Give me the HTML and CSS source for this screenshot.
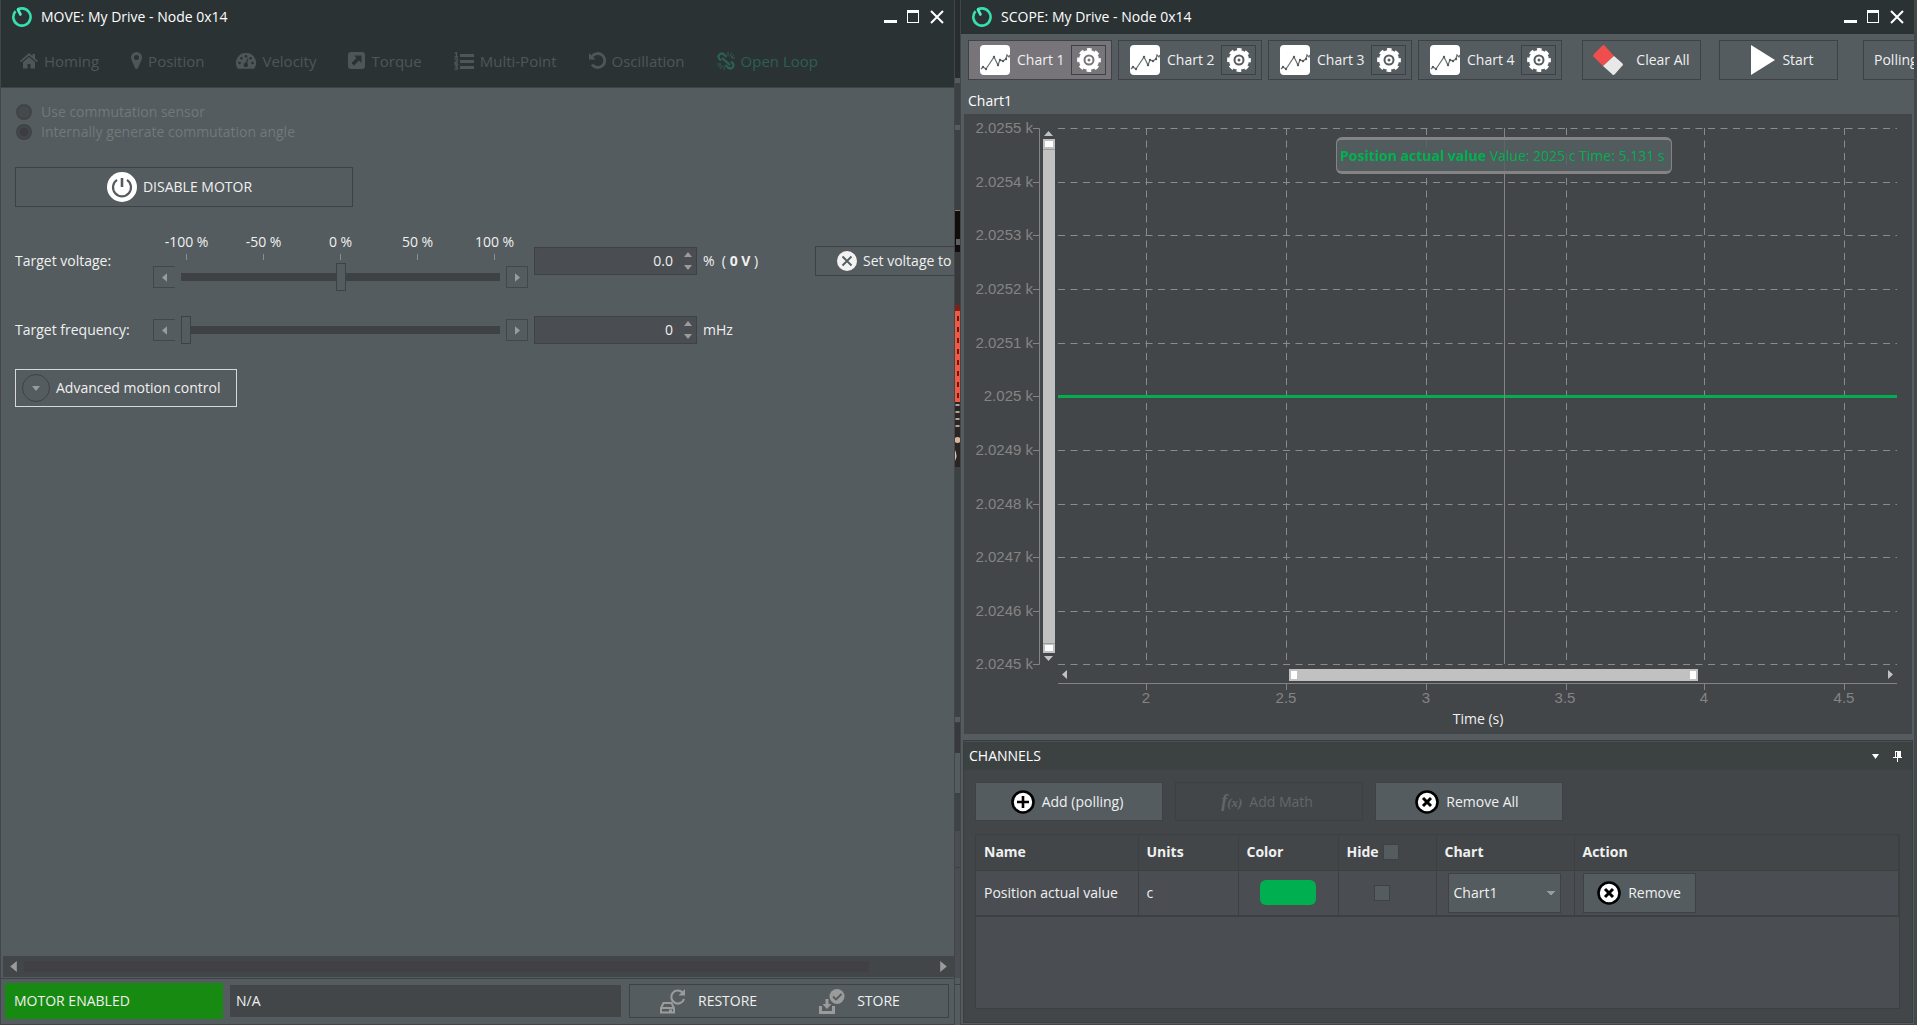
FILE: index.html
```
<!DOCTYPE html>
<html lang="en">
<head>
  <meta charset="UTF-8">
  <meta name="viewport" content="width=device-width, initial-scale=1.0">
  <title>My Drive - Node 0x14</title>
  <link rel="stylesheet" href="styles.css">
</head>
<body>

  <!-- shared icons -->
  <svg class="sprite" width="0" height="0" aria-hidden="true">
    <symbol id="logo" viewBox="0 0 20 20">
      <path d="M3.600 4.200A8.600 8.600 0 1 0 10 1.400c-1.600 0-3 .3-4.400 1.100" fill="none" stroke="#35e0b0" stroke-width="2.600"/>
      <path d="M6 2.600 8.400 7.400" fill="none" stroke="#4deec0" stroke-width="2.800" stroke-linecap="round"/>
    </symbol>
    <symbol id="chart" viewBox="0 0 30 30">
      <rect width="30" height="30" rx="4" fill="#fff"/>
      <path d="M1 24l2-2 3 2 8-12 4 8 2-5 3 1 3-2 1-4 2 2 1-2" fill="none" stroke="#6a7073" stroke-width="1.200"/>
      <g fill="#555c5e"><circle cx="3" cy="22" r="1.200"/><circle cx="6" cy="24" r="1.200"/><circle cx="14" cy="12" r="1.200"/><circle cx="18" cy="20" r="1.200"/><circle cx="20" cy="15" r="1.200"/><circle cx="23" cy="16" r="1.200"/><circle cx="26" cy="14" r="1.200"/></g>
    </symbol>
    <symbol id="gear" viewBox="0 0 24 24">
      <circle cx="12" cy="12" r="7.800" fill="none" stroke="#fff" stroke-width="4.600"/>
      <circle cx="12" cy="12" r="10.400" fill="none" stroke="#fff" stroke-width="3" stroke-dasharray="4.600 3.568" stroke-dashoffset="2.300"/>
      <circle cx="12" cy="12" r="2.500" fill="none" stroke="#fff" stroke-width="2"/>
    </symbol>
    <symbol id="cross" viewBox="0 0 24 24">
      <circle cx="12" cy="12" r="10.500" fill="#fff" stroke="#000" stroke-width="2.600"/>
      <path d="M8 8l8 8M16 8l-8 8" stroke="#000" stroke-width="3"/>
    </symbol>
    <symbol id="win-min" viewBox="0 0 14 14"><path d="M0 10h13v3H0z" fill="#fff"/></symbol>
    <symbol id="win-max" viewBox="0 0 14 14"><path d="M0 0h12v13H0zM1 3v9h10V3z" fill="#fff" fill-rule="evenodd"/></symbol>
    <symbol id="win-close" viewBox="0 0 14 14"><path d="M1 1l12 12M13 1L1 13" stroke="#fff" stroke-width="2"/></symbol>
    <symbol id="tri-left" viewBox="0 0 6 10"><path d="M6 0v10L0 5z" fill="#9b9b9b"/></symbol>
    <symbol id="tri-right" viewBox="0 0 6 10"><path d="M0 0v10l6-5z" fill="#9b9b9b"/></symbol>
    <symbol id="tri-up" viewBox="0 0 8 5"><path d="M0 5h8L4 0z" fill="#9b9b9b"/></symbol>
    <symbol id="tri-down" viewBox="0 0 8 5"><path d="M0 0h8L4 5z" fill="#9b9b9b"/></symbol>
  </svg>

  <main class="desktop">

    <!-- MOVE window -->
    <section class="window">
      <header class="titlebar">
        <svg class="logo"><use href="#logo"/></svg>
        <h1>MOVE: My Drive - Node 0x14</h1>
        <button class="win-btn" aria-label="Minimize"><svg><use href="#win-min"/></svg></button>
        <button class="win-btn" aria-label="Maximize"><svg><use href="#win-max"/></svg></button>
        <button class="win-btn" aria-label="Close"><svg><use href="#win-close"/></svg></button>
      </header>

      <nav class="tabs">
        <button class="tab" disabled>
          <svg width="18" height="16" viewBox="0 0 18 16"><path d="M9 0L0 8l1 1.300L9 2.500l8 6.800L18 8l-3-2.700V1h-2.500v2zM9 4L3 9v6.500h4.500V11h3v4.500H15V9z" fill="currentColor"/></svg>
          Homing
        </button>
        <button class="tab" disabled>
          <svg width="11" height="17" viewBox="0 0 11 17"><path d="M5.500 0A5.500 5.500 0 0 0 0 5.500C0 8 2 11 4 16c.5 1.200 2.500 1.200 3 0 2-5 4-8 4-10.500A5.500 5.500 0 0 0 5.500 0zm0 3a2.500 2.500 0 1 1 0 5 2.500 2.500 0 0 1 0-5z" fill="currentColor" fill-rule="evenodd"/></svg>
          Position
        </button>
        <button class="tab" disabled>
          <svg width="20" height="16" viewBox="0 0 20 16"><path d="M10 0A9.800 9.800 0 0 0 1.600 15.200c.2.500.5.600.9.600h15c.4 0 .7-.1.900-.6A9.800 9.800 0 0 0 10 0z" fill="currentColor"/><g fill="#2b3234"><circle cx="3.500" cy="10" r="1.300"/><circle cx="5.500" cy="5.300" r="1.300"/><circle cx="10" cy="3.200" r="1.300"/><circle cx="14.600" cy="5.300" r="1.300"/><circle cx="16.500" cy="10" r="1.300"/><circle cx="9.800" cy="12" r="2.200"/><path d="M11.300 5.500l1 .3-1.500 6-1.500-.4z"/></g></svg>
          Velocity
        </button>
        <button class="tab" disabled>
          <svg width="17" height="17" viewBox="0 0 17 17"><rect width="17" height="17" rx="3" fill="currentColor"/><path d="M6 3.500h7.500V11L11 8.500l-5 5L3.500 11l5-5z" fill="#2b3234"/></svg>
          Torque
        </button>
        <button class="tab" disabled>
          <svg width="20" height="18" viewBox="0 0 20 18"><path d="M6 2h14v3H6zM6 8h14v3H6zM6 14h14v3H6z" fill="currentColor"/><path d="M.5 1.500L2.500.5V5M.5 5H4M.5 7.500Q4 6 3.500 8.500L.8 11H4M.5 13h3l-1.500 2q2 0 1.500 1.500T.5 17" fill="none" stroke="currentColor" stroke-width="1.300"/></svg>
          Multi-Point
        </button>
        <button class="tab" disabled>
          <svg width="17" height="17" viewBox="0 0 17 17"><path d="M3 4.500A7 7 0 1 1 3 12.500" fill="none" stroke="currentColor" stroke-width="2.800"/><path d="M0 1v6.500h6.500z" fill="currentColor"/></svg>
          Oscillation
        </button>
        <button class="tab active" disabled>
          <svg width="18" height="18" viewBox="0 0 18 18"><g fill="none" stroke="currentColor" stroke-width="2.300"><path d="M4 8.500L2.500 7Q.5 4.500 2.500 2.500T7 2.500L9.500 5M14 9.500l1.500 1.500q2 2.500 0 4.500t-4.500 0L8.500 13M5 6l8 7"/></g><path d="M11 0v4M15 1l-2.500 3.500M18 6h-4M17 3.500L14 5M7 18v-4M3 17l2.500-3.500M0 12h4M1 15l3-2" stroke="currentColor"/></svg>
          Open Loop
        </button>
      </nav>

      <div class="move-body">
        <div class="mode">
          <label><input type="radio" name="mode" disabled>Use commutation sensor</label>
          <label><input type="radio" name="mode" checked disabled>Internally generate commutation angle</label>
        </div>

        <button class="btn disable-motor">
          <svg width="30" height="30" viewBox="0 0 30 30"><circle cx="15" cy="15" r="15" fill="#fff"/><path d="M10 7.800a9 9 0 1 0 10 0" fill="none" stroke="#545c5f" stroke-width="2.200"/><path d="M15 6v9" stroke="#545c5f" stroke-width="2.600"/></svg>
          DISABLE MOTOR
        </button>

        <div class="target with-scale">
          <label for="voltage">Target voltage:</label>
          <div class="slider-box">
            <div class="scale"><span>-100 %</span><span>-50 %</span><span>0 %</span><span>50 %</span><span>100 %</span></div>
            <div class="slider">
              <button class="step step-left" aria-label="Decrease voltage"><svg><use href="#tri-left"/></svg></button>
              <input type="range" min="-100" max="100" value="0" aria-label="Target voltage">
              <button class="step" aria-label="Increase voltage"><svg><use href="#tri-right"/></svg></button>
            </div>
          </div>
          <div class="spin">
            <input type="text" id="voltage" value="0.0">
            <div class="spin-btns">
              <button aria-label="Up"><svg><use href="#tri-up"/></svg></button>
              <button aria-label="Down"><svg><use href="#tri-down"/></svg></button>
            </div>
          </div>
          <span class="unit">% &nbsp;( <b>0 V</b> )</span>
          <button class="btn set-zero">
            <svg width="20" height="20" viewBox="0 0 20 20"><circle cx="10" cy="10" r="10" fill="#f2f2f2"/><path d="M5.500 5.500l9 9M14.500 5.500l-9 9" stroke="#545c5f" stroke-width="1.800"/></svg>
            Set voltage to 0
          </button>
        </div>

        <div class="target">
          <label for="frequency">Target frequency:</label>
          <div class="slider-box">
            <div class="slider">
              <button class="step step-left" aria-label="Decrease frequency"><svg><use href="#tri-left"/></svg></button>
              <input type="range" min="0" max="100" value="0" aria-label="Target frequency">
              <button class="step" aria-label="Increase frequency"><svg><use href="#tri-right"/></svg></button>
            </div>
          </div>
          <div class="spin">
            <input type="text" id="frequency" value="0">
            <div class="spin-btns">
              <button aria-label="Up"><svg><use href="#tri-up"/></svg></button>
              <button aria-label="Down"><svg><use href="#tri-down"/></svg></button>
            </div>
          </div>
          <span class="unit">mHz</span>
        </div>

        <button class="advanced">
          <span class="round"><svg><use href="#tri-down"/></svg></span>
          Advanced motion control
        </button>
      </div>

      <div class="hscroll">
        <button aria-label="Scroll left"><svg><use href="#tri-left"/></svg></button>
        <div class="hscroll-track"><div class="hscroll-thumb"></div></div>
        <button aria-label="Scroll right"><svg><use href="#tri-right"/></svg></button>
      </div>

      <footer class="status">
        <div class="status-motor">MOTOR ENABLED</div>
        <div class="status-text">N/A</div>
        <div class="status-actions">
          <button>
            <svg width="26" height="25" viewBox="0 0 26 25"><g fill="none" stroke="#9b9b9b" stroke-width="2"><path d="M22.500 3.500A6.500 6.500 0 1 0 24 10" stroke-width="2.200"/><path d="M1 23.500V19l2.500-5h8l2.500 5v4.500zM1 19h13M9 21.500h3"/></g><path d="M25 0v6.500h-6.500z" fill="#9b9b9b"/></svg>
            RESTORE
          </button>
          <button>
            <svg width="26" height="25" viewBox="0 0 26 25"><circle cx="18" cy="7.500" r="7.500" fill="#9b9b9b"/><path d="M14 7.500l3 3 5.500-5.500" fill="none" stroke="#545c5f" stroke-width="1.800"/><path d="M1.500 17v6.500h13V17" fill="none" stroke="#9b9b9b" stroke-width="3"/><path d="M6.500 10h3v5h3L8 20l-4.500-5h3z" fill="#9b9b9b"/></svg>
            STORE
          </button>
          <svg class="overflow-mark" width="8" height="8" viewBox="0 0 8 8"><path d="M0 0h8v1H0zM0 3h8L4 8z" fill="#6a7073"/></svg>
        </div>
      </footer>
    </section>

    <!-- sliver of the main window between the two tool windows -->
    <div class="sliver">
      <svg width="5" height="1025" viewBox="0 0 5 1025">
        <rect width="5" height="78" fill="#282e30"/>
        <path d="M0 78h5v5H0zM0 125h5v5H0z" fill="#545c5f"/>
        <path d="M0 210h5v42H0z" fill="#100d0c"/>
        <path d="M0 210h5v1H0z" fill="#8a7a60"/>
        <path d="M1 239h4v6H1z" fill="#5c6062"/>
        <path d="M0 252h5v53H0z" fill="#38393b"/>
        <path d="M0 305h5v6H0z" fill="#7c2018"/>
        <path d="M0 311h5v91H0z" fill="#ee5a44"/>
        <path d="M3 316v85" stroke="#6d150f" stroke-width="2" stroke-dasharray="5 6"/>
        <path d="M0 402h5v65H0z" fill="#2a2422"/>
        <path d="M2.500 404v26" stroke="#a9a5a0" stroke-width="4" stroke-dasharray="2 5"/>
        <circle cx="2.500" cy="440" r="3" fill="#d8b49a"/>
        <path d="M0 450q3 6 0 11z" fill="#d8c4b0"/>
        <path d="M0 717h5v5H0zM0 753h5v40H0z" fill="#545c5f"/>
        <path d="M0 723h5v30H0z" fill="#37393d"/>
        <path d="M0 796h5v34H0z" fill="#3e4345"/>
        <path d="M0 831h5v36H0zM0 868h5v110H0z" fill="#4a4e52"/>
        <path d="M0 978h5v47H0z" fill="#545c5f"/>
        <path d="M0 984h5v1H0z" fill="#3c4144"/>
      </svg>
    </div>

    <!-- SCOPE window -->
    <section class="window">
      <header class="titlebar">
        <svg class="logo"><use href="#logo"/></svg>
        <h1>SCOPE: My Drive - Node 0x14</h1>
        <button class="win-btn" aria-label="Minimize"><svg><use href="#win-min"/></svg></button>
        <button class="win-btn" aria-label="Maximize"><svg><use href="#win-max"/></svg></button>
        <button class="win-btn" aria-label="Close"><svg><use href="#win-close"/></svg></button>
      </header>

      <div class="toolbar">
        <div class="chart-btn selected">
          <button class="chart-name"><svg><use href="#chart"/></svg>Chart 1</button>
          <button class="gear" aria-label="Chart 1 settings"><svg><use href="#gear"/></svg></button>
        </div>
        <div class="chart-btn">
          <button class="chart-name"><svg><use href="#chart"/></svg>Chart 2</button>
          <button class="gear" aria-label="Chart 2 settings"><svg><use href="#gear"/></svg></button>
        </div>
        <div class="chart-btn">
          <button class="chart-name"><svg><use href="#chart"/></svg>Chart 3</button>
          <button class="gear" aria-label="Chart 3 settings"><svg><use href="#gear"/></svg></button>
        </div>
        <div class="chart-btn">
          <button class="chart-name"><svg><use href="#chart"/></svg>Chart 4</button>
          <button class="gear" aria-label="Chart 4 settings"><svg><use href="#gear"/></svg></button>
        </div>
        <button class="btn tool clear">
          <svg width="30" height="30" viewBox="0 0 30 30"><path d="M1 9L9 1q2-2 3 0l9 10L10 21 1 12q-2-1 0-3z" fill="#f04e4e"/><path d="M21 11l8 7q2 2 0 3l-7 8q-2 2-3 0l-9-8z" fill="#e8e8e8"/></svg>
          Clear All
        </button>
        <button class="btn tool start">
          <svg width="24" height="30" viewBox="0 0 24 30"><path d="M0 0l24 15L0 30z" fill="#fff"/></svg>
          Start
        </button>
        <button class="btn tool polling">Polling</button>
      </div>

      <h2 class="chart-title">Chart1</h2>

      <div class="chart-panel">
        <svg viewBox="0 0 948 620" role="img" aria-label="Position actual value over time">
          <g class="grid">
            <path d="M94 14.500h839M94 68.500h839M94 121.500h839M94 175.500h839M94 229.500h839M94 282.500h839M94 336.500h839M94 390.500h839M94 443.500h839M94 497.500h839M94 550.500h839"/>
            <path d="M182.500 14v536M322.500 14v536M462.500 14v536M602.500 14v536M740.500 14v536M880.500 14v536"/>
          </g>
          <path class="axis" d="M69 14.500h6.500v536H69M69 68.500h6M69 121.500h6M69 175.500h6M69 229.500h6M69 282.500h6M69 336.500h6M69 390.500h6M69 443.500h6M69 497.500h6"/>
          <path class="axis" d="M94 569.500h839M182.500 570v6M322.500 570v6M462.500 570v6M602.500 570v6M740.500 570v6M880.500 570v6"/>
          <g class="y-labels">
            <text x="69" y="19">2.0255 k</text>
            <text x="69" y="73">2.0254 k</text>
            <text x="69" y="126">2.0253 k</text>
            <text x="69" y="180">2.0252 k</text>
            <text x="69" y="234">2.0251 k</text>
            <text x="69" y="287">2.025 k</text>
            <text x="69" y="341">2.0249 k</text>
            <text x="69" y="395">2.0248 k</text>
            <text x="69" y="448">2.0247 k</text>
            <text x="69" y="502">2.0246 k</text>
            <text x="69" y="555">2.0245 k</text>
          </g>
          <g class="x-labels">
            <text x="182" y="589">2</text>
            <text x="322" y="589">2.5</text>
            <text x="462" y="589">3</text>
            <text x="601" y="589">3.5</text>
            <text x="740" y="589">4</text>
            <text x="880" y="589">4.5</text>
          </g>
          <text class="x-title" x="514" y="610">Time (s)</text>

          <!-- zoom bars -->
          <rect x="79" y="25" width="12" height="514" fill="#c1c1c1"/>
          <path d="M79 35.500h12M79 529.500h12" stroke="#9d9d9d"/>
          <path d="M81 27h8v6h-8zM81 531h8v6h-8z" fill="#fff"/>
          <path d="M80 22h9l-4.500-5zM80 542h9l-4.500 5z" fill="#c1c1c1"/>
          <rect x="325" y="555" width="409" height="12" fill="#c1c1c1"/>
          <path d="M327 557h6v8h-6zM726 557h6v8h-6z" fill="#fff"/>
          <path d="M103 556v9l-5-4.500zM924 556v9l5-4.500z" fill="#c1c1c1"/>

          <path d="M94 282.500h839" stroke="#00b050" stroke-width="3"/>
          <path d="M540.500 14v536" stroke="#848484"/>
          <rect x="372" y="23" width="336" height="37" rx="6" fill="#848484"/>
          <rect x="373" y="26" width="334" height="31" rx="4" fill="#525b5e"/>
          <path d="M540.500 26v31M462.500 26v7M602.500 39v12" stroke="#5e6669"/>
          <text class="tip" x="376" y="47"><tspan class="tip-name">Position actual value</tspan> Value: 2025 c Time: 5.131 s</text>
        </svg>
      </div>

      <section class="channels">
        <header class="channels-head">
          <h2>CHANNELS</h2>
          <button aria-label="Panel menu"><svg width="7" height="5" viewBox="0 0 7 5"><path d="M0 0h7L3.500 5z" fill="#fff"/></svg></button>
          <button aria-label="Pin panel"><svg width="9" height="11" viewBox="0 0 9 11"><path d="M2 0h6v6h1v1H5v4H4V7H0V6h2zM3 1v5h1V1z" fill="#fff" fill-rule="evenodd"/></svg></button>
        </header>
        <div class="channel-btns">
          <button class="btn">
            <svg width="24" height="24" viewBox="0 0 24 24"><circle cx="12" cy="12" r="10.500" fill="#fff" stroke="#000" stroke-width="2.600"/><path d="M12 6v12M6 12h12" stroke="#000" stroke-width="2.600"/></svg>
            Add (polling)
          </button>
          <button class="btn" disabled>
            <i class="fx">f<small>(x)</small></i>
            Add Math
          </button>
          <button class="btn"><svg width="24" height="24"><use href="#cross"/></svg>Remove All</button>
        </div>
        <div class="table-box">
          <table>
            <colgroup><col class="c-name"><col class="c-mid"><col class="c-mid"><col class="c-hide"><col class="c-chart"><col></colgroup>
            <thead>
              <tr>
                <th>Name</th>
                <th>Units</th>
                <th>Color</th>
                <th><label class="hide-all">Hide <input type="checkbox"></label></th>
                <th>Chart</th>
                <th>Action</th>
              </tr>
            </thead>
            <tbody>
              <tr>
                <td>Position actual value</td>
                <td>c</td>
                <td><button class="swatch" aria-label="Channel color"></button></td>
                <td class="hide-cell"><input type="checkbox" aria-label="Hide channel"></td>
                <td><select aria-label="Chart"><option>Chart1</option></select></td>
                <td><button class="btn remove"><svg width="24" height="24"><use href="#cross"/></svg>Remove</button></td>
              </tr>
            </tbody>
          </table>
        </div>
      </section>
    </section>
  </main>

</body>
</html>
```
FILE: styles.css
```
* {
  box-sizing: border-box;
}

body {
  margin: 0;
  background-color: #42494c;
  color: #f0f0f0;
  font-family: "Open Sans", "Noto Sans", sans-serif;
  font-size: 14px;
  line-height: 20px;
}

button,
input,
select {
  font: inherit;
  color: inherit;
  margin: 0;
}

button {
  background: none;
  border: 0;
  padding: 0;
  display: flex;
  align-items: center;
  justify-content: center;
  white-space: nowrap;
}

h1,
h2 {
  margin: 0;
  font-size: 14px;
  font-weight: normal;
}

svg {
  flex: none;
}

.sprite {
  display: none;
}

/* windows */
.desktop {
  display: grid;
  grid-template-columns: minmax(0, 1fr) 5px minmax(0, 1fr);
  grid-template-rows: minmax(0, 1fr);
  height: 100vh;
  padding-right: 2px;
}

.window {
  display: flex;
  flex-direction: column;
  min-height: 0;
  background-color: #545c5f;
  border: 1px solid #42464a;
  border-top: 0;
  overflow: hidden;
}

.sliver {
  overflow: hidden;
  background-color: #3c4144;
}

.titlebar {
  display: flex;
  align-items: center;
  gap: 9px;
  height: 34px;
  flex: none;
  margin: 0 -1px;
  padding: 0 11px 0 12px;
  background-color: #2b3234;
  color: #fff;
}

.titlebar h1 {
  flex: 1;
}

.logo {
  width: 20px;
  height: 20px;
}

.win-btn svg {
  width: 14px;
  height: 14px;
}

/* tabs */
.tabs {
  display: flex;
  gap: 32px;
  height: 54px;
  flex: none;
  margin: 0 -1px;
  padding: 0 20px;
  background-color: #2b3234;
  border-bottom: 1px solid #3d4446;
}

.tab {
  gap: 6px;
  font-size: 15px;
  color: #505658;
}

.tab.active {
  color: #2b6052;
}

/* move panel */
.move-body {
  flex: 1;
  min-height: 0;
  padding: 14px 0 0 14px;
  overflow: hidden;
}

.mode label {
  display: flex;
  align-items: center;
  gap: 9px;
  padding-left: 1px;
  color: #72787b;
}

input[type="radio"] {
  appearance: none;
  width: 16px;
  height: 16px;
  border: 2px solid #3f4447;
  border-radius: 50%;
  background-color: #45494c;
}

input[type="radio"]:checked {
  background: radial-gradient(circle, #3c3c42 4px, #45494c 5px);
}

.btn {
  gap: 7px;
  border: 1px solid #3e4246;
  background-color: #545c5f;
}

.disable-motor {
  width: 338px;
  height: 40px;
  margin-top: 25px;
  padding-right: 9px;
  gap: 6px;
}

.target {
  display: flex;
  align-items: center;
  height: 30px;
}

.target > label {
  width: 138px;
  flex: none;
}

.slider-box {
  width: 375px;
  flex: none;
  margin-right: 6px;
}

.with-scale {
  align-items: flex-start;
  height: 55px;
  margin: 29px 0 24px;
}

.with-scale .spin {
  margin-top: 11px;
}

.with-scale .btn {
  margin-top: 10px;
}

.with-scale > label,
.with-scale .unit {
  margin-top: 15px;
}

.scale {
  display: grid;
  grid-template-columns: repeat(5, 1fr);
  margin: -4px -5px 3px;
}

.scale span {
  display: flex;
  flex-direction: column;
  align-items: center;
}

.scale span::after {
  content: "";
  width: 1px;
  height: 6px;
  margin-top: 2px;
  background-color: #8a8e90;
}

.slider {
  display: flex;
  align-items: center;
  gap: 6px;
}

.step {
  width: 22px;
  height: 22px;
  flex: none;
  border: 1px solid #42474a;
}

.step-left {
  border-right: 0;
}

.step svg {
  width: 5px;
  height: 9px;
}

input[type="range"] {
  appearance: none;
  flex: 1;
  min-width: 0;
  height: 28px;
  background: none;
}

input[type="range"]::-webkit-slider-runnable-track {
  height: 8px;
  background-color: #3e4244;
}

input[type="range"]::-webkit-slider-thumb {
  appearance: none;
  width: 10px;
  height: 28px;
  margin-top: -10px;
  background-color: #545c5f;
  border: 1px solid #3e4246;
}

.spin {
  display: flex;
  width: 163px;
  height: 28px;
  flex: none;
  background-color: #4a4e52;
  border: 1px solid #3e4246;
}

.spin input {
  flex: 1;
  min-width: 0;
  padding: 0 11px 0 4px;
  border: 0;
  background: none;
  text-align: right;
}

.spin-btns {
  display: flex;
  flex-direction: column;
  width: 12px;
}

.spin-btns button {
  flex: 1;
  justify-content: flex-start;
}

.spin-btns svg {
  width: 8px;
  height: 5px;
}

.unit {
  width: 112px;
  flex: none;
  margin-left: 6px;
}

.set-zero {
  height: 30px;
  flex: none;
  padding: 0 21px;
  gap: 6px;
}

.advanced {
  height: 38px;
  margin-top: 24px;
  padding: 0 16px 0 6px;
  gap: 6px;
  border: 1px solid #d8d8d8;
}

.round {
  display: flex;
  align-items: center;
  justify-content: center;
  width: 28px;
  height: 28px;
  border: 1px solid #3e4246;
  border-radius: 50%;
}

.round svg {
  width: 8px;
  height: 5px;
}

.hscroll {
  display: flex;
  align-items: center;
  height: 21px;
  flex: none;
  margin: 0 0 1px 2px;
  background-color: #424648;
}

.hscroll button {
  width: 21px;
}

.hscroll button svg {
  width: 7px;
  height: 11px;
}

.hscroll-track {
  flex: 1;
}

.hscroll-thumb {
  width: 93%;
  height: 11px;
  background-color: #404045;
}

.status {
  display: flex;
  align-items: center;
  height: 46px;
  flex: none;
  padding: 0 5px 1px 4px;
  border-top: 1px solid #3e4246;
}

.status-motor {
  width: 218px;
  padding: 8px 9px;
  background-color: #178a12;
}

.status-text {
  flex: 1;
  margin: 0 8px 0 7px;
  padding: 6px;
  background-color: #424648;
}

.status-actions {
  display: flex;
  align-items: center;
  gap: 62px;
  width: 320px;
  height: 34px;
  padding: 0 4px 0 30px;
  border: 1px solid #3e4246;
}

.status-actions button {
  gap: 12px;
}

.overflow-mark {
  margin: 12px 0 0 auto;
}

/* scope toolbar */
.toolbar {
  display: flex;
  gap: 6px;
  height: 52px;
  flex: none;
  padding: 6px 0 6px 7px;
}

.chart-btn {
  display: flex;
  align-items: center;
  justify-content: space-between;
  width: 144px;
  height: 40px;
  flex: none;
  padding: 0 5px 0 11px;
  border: 1px solid #3e4246;
}

.chart-btn.selected {
  background-color: #77757a;
}

.chart-name {
  gap: 7px;
}

.chart-name svg {
  width: 30px;
  height: 30px;
}

.gear {
  width: 35px;
  height: 30px;
  border: 1px solid #3e4246;
}

.gear svg {
  width: 24px;
  height: 24px;
}

.tool {
  width: 119px;
  height: 40px;
  flex: none;
}

.clear {
  gap: 13px;
  margin-left: 14px;
}

.start {
  margin-left: 12px;
  padding-left: 8px;
}

.polling {
  justify-content: flex-start;
  margin-left: 19px;
  padding-left: 10px;
}

.chart-title {
  height: 28px;
  flex: none;
  padding: 5px 7px;
  color: #fff;
}

.chart-panel {
  flex: 1;
  min-height: 0;
  margin: 0 2px 6px 3px;
  background-color: #424648;
}

.chart-panel svg {
  display: block;
  width: 100%;
  height: 100%;
}

.grid path {
  fill: none;
  stroke: #8a8b8b;
  stroke-dasharray: 7 5.5;
}

.axis {
  fill: none;
  stroke: #848484;
}

.y-labels,
.x-labels {
  font-family: "Liberation Sans", Arial, sans-serif;
  font-size: 15px;
  fill: #848484;
  text-anchor: end;
}

.x-labels,
.x-title {
  text-anchor: middle;
}

.x-title {
  fill: #f0f0f0;
}

.tip {
  fill: #00b050;
}

.tip-name {
  font-weight: bold;
}

/* channels */
.channels {
  flex: none;
  margin: 0 1px 1px 2px;
  padding-bottom: 13px;
  background-color: #424648;
  border: 1px solid #3a3e41;
}

.channels-head {
  display: flex;
  align-items: center;
  gap: 14px;
  height: 29px;
  padding: 0 10px 0 5px;
  background-color: #3c4142;
  border-top: 1px solid #4a4e52;
  color: #fff;
}

.channels-head h2 {
  flex: 1;
}

.channel-btns {
  display: flex;
  gap: 12px;
  padding: 12px 11px 13px;
}

.channel-btns .btn {
  width: 188px;
  height: 39px;
  padding-right: 4px;
}

.channel-btns .btn:disabled {
  background: none;
  color: #63676a;
  border-color: #3c4043;
}

.fx {
  font-family: "Liberation Serif", serif;
  font-size: 18px;
  font-weight: bold;
}

.fx small {
  font-size: 13px;
}

.table-box {
  height: 175px;
  margin: 0 12px 0 11px;
  background-color: #4a4e52;
  border: 1px solid #3c4043;
}

table {
  width: 100%;
  border-collapse: collapse;
  table-layout: fixed;
}

.c-name {
  width: 162px;
}

.c-mid {
  width: 100px;
}

.c-hide {
  width: 98px;
}

.c-chart {
  width: 138px;
}

th,
td {
  padding: 0 8px;
  border-right: 1px solid #3c4043;
  text-align: left;
}

th {
  height: 35px;
  background-color: #424648;
  border-bottom: 1px solid #3c4043;
}

td {
  height: 46px;
  border-bottom: 2px solid #3c4043;
}

.hide-cell {
  padding-left: 35px;
}

.hide-all {
  display: flex;
  align-items: center;
  gap: 4px;
}

input[type="checkbox"] {
  appearance: none;
  display: block;
  width: 16px;
  height: 16px;
  background-color: #545c5f;
  border: 1px solid #3e4246;
}

.swatch {
  width: 56px;
  height: 25px;
  margin: 0 auto;
  border-radius: 6px;
  background-color: #00b050;
}

select {
  appearance: none;
  display: block;
  width: 113px;
  height: 40px;
  margin-left: 3px;
  padding: 0 5px;
  border: 1px solid #3e4246;
  border-radius: 0;
  background: linear-gradient(to bottom right, #9b9b9b 50%, transparent 50%) 102px 17px / 4px 5px no-repeat,
    linear-gradient(to bottom left, #9b9b9b 50%, transparent 50%) 98px 17px / 4px 5px no-repeat,
    #545c5f;
}

.remove {
  width: 113px;
  height: 40px;
}
```
